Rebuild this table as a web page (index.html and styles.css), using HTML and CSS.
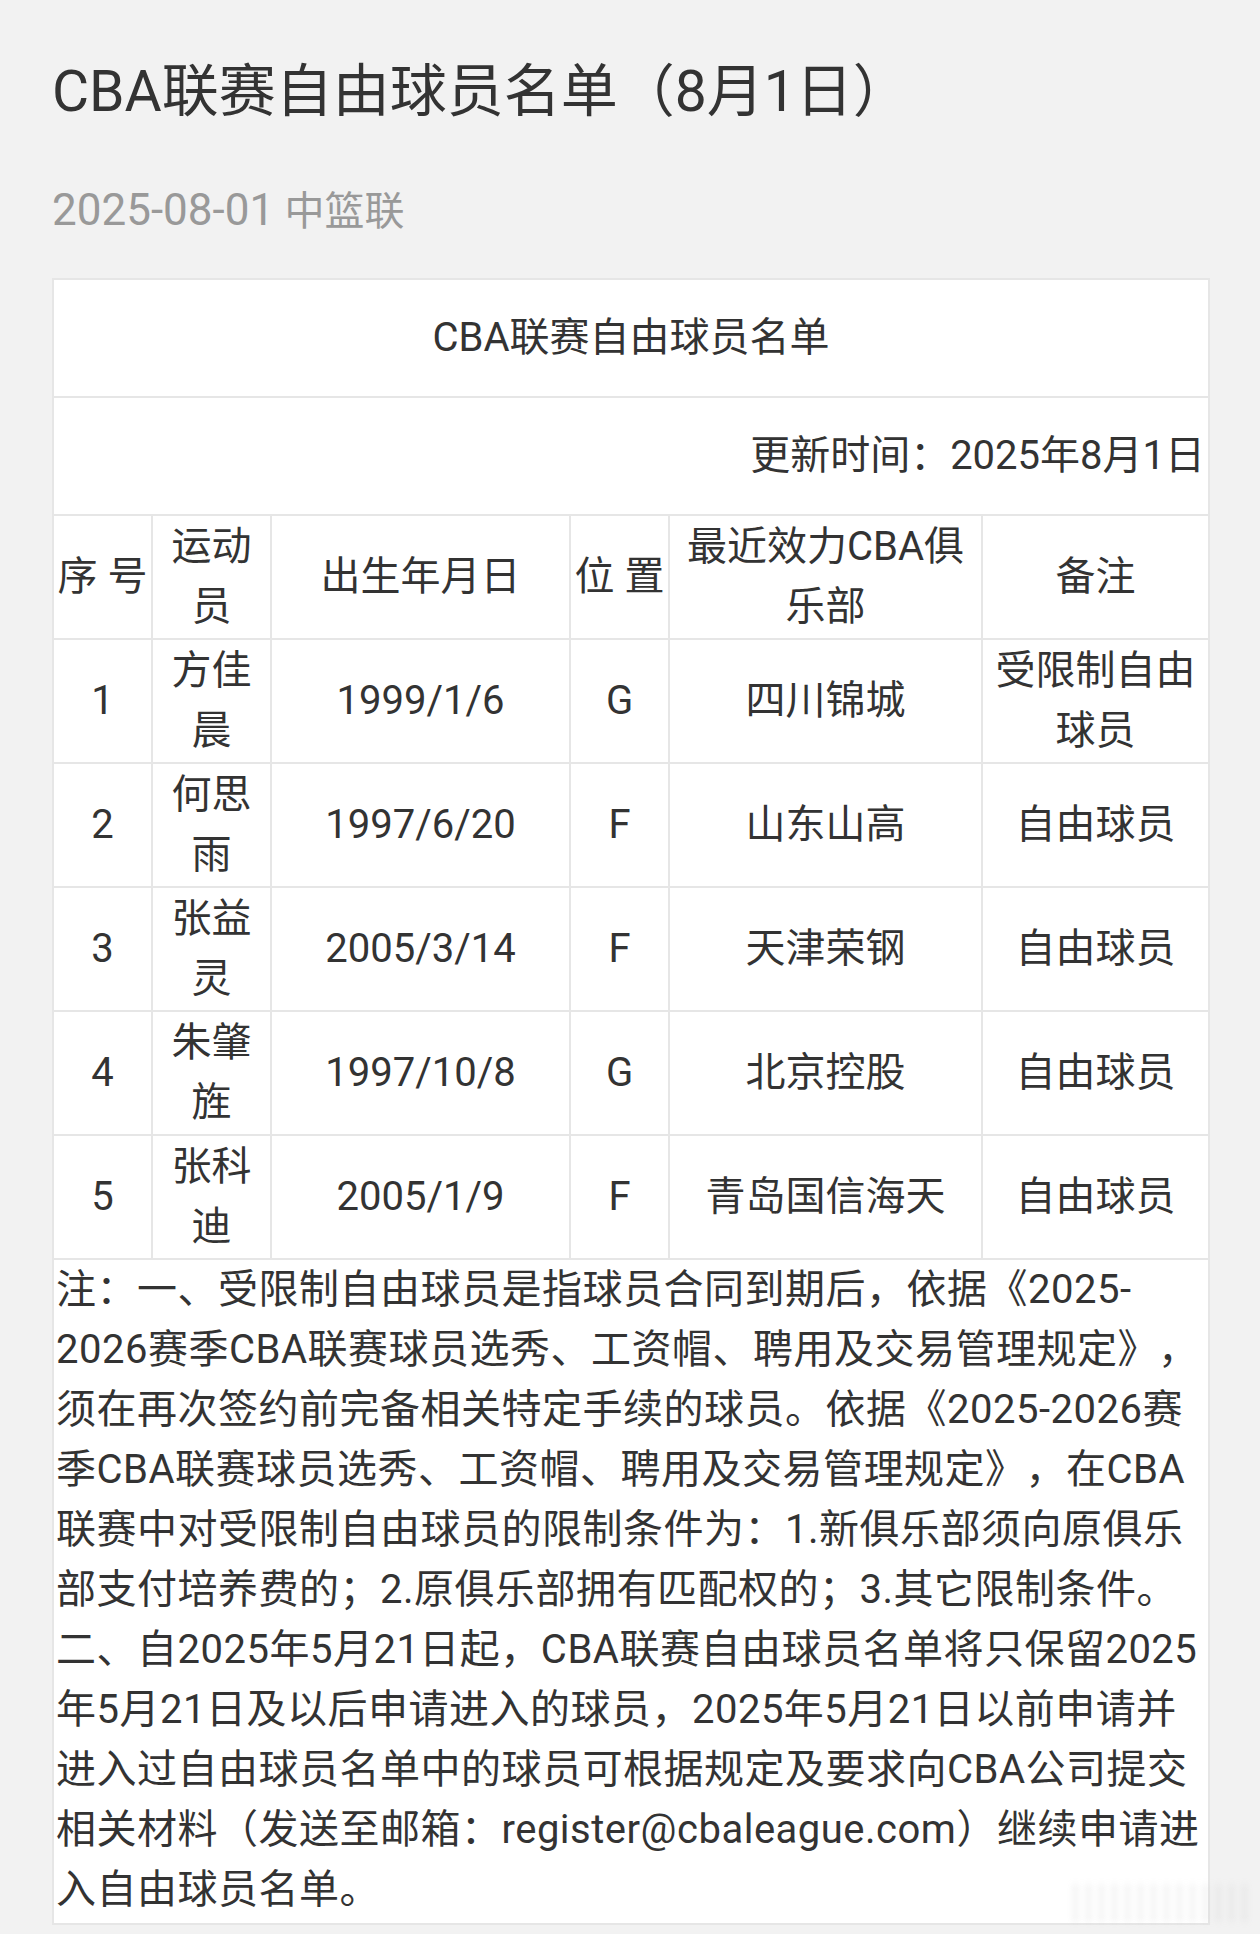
FILE: index.html
```html
<!DOCTYPE html>
<html lang="zh-CN">
<head>
<meta charset="utf-8">
<title>CBA联赛自由球员名单（8月1日）</title>
<link rel="stylesheet" href="styles.css">
</head>
<body>
<div class="page">
  <h1 class="title">CBA联赛自由球员名单（8月1日）</h1>
  <div class="meta"><span class="meta-date">2025-08-01</span> <span class="meta-src">中篮联</span></div>
  <table class="roster">
    <colgroup>
      <col class="c1"><col class="c2"><col class="c3"><col class="c4"><col class="c5"><col class="c6">
    </colgroup>
    <tr><td colspan="6" class="cap">CBA联赛自由球员名单</td></tr>
    <tr><td colspan="6" class="upd">更新时间：2025年8月1日</td></tr>
    <tr>
      <td>序 号</td><td>运动员</td><td>出生年月日</td><td>位 置</td><td>最近效力CBA俱乐部</td><td>备注</td>
    </tr>
    <tr><td>1</td><td>方佳晨</td><td>1999/1/6</td><td>G</td><td>四川锦城</td><td>受限制自由球员</td></tr>
    <tr><td>2</td><td>何思雨</td><td>1997/6/20</td><td>F</td><td>山东山高</td><td>自由球员</td></tr>
    <tr><td>3</td><td>张益灵</td><td>2005/3/14</td><td>F</td><td>天津荣钢</td><td>自由球员</td></tr>
    <tr><td>4</td><td>朱肇旌</td><td>1997/10/8</td><td>G</td><td>北京控股</td><td>自由球员</td></tr>
    <tr><td>5</td><td>张科迪</td><td>2005/1/9</td><td>F</td><td>青岛国信海天</td><td>自由球员</td></tr>
    <tr>
      <td colspan="6" class="notes">注：一、受限制自由球员是指球员合同到期后，依据《2025-<br>2026赛季CBA联赛球员选秀、工资帽、聘用及交易管理规定》，<br>须在再次签约前完备相关特定手续的球员。依据《2025-2026赛<br>季CBA联赛球员选秀、工资帽、聘用及交易管理规定》，在CBA<br>联赛中对受限制自由球员的限制条件为：1.新俱乐部须向原俱乐<br>部支付培养费的；2.原俱乐部拥有匹配权的；3.其它限制条件。<br>二、自2025年5月21日起，CBA联赛自由球员名单将只保留2025<br>年5月21日及以后申请进入的球员，2025年5月21日以前申请并<br>进入过自由球员名单中的球员可根据规定及要求向CBA公司提交<br>相关材料（发送至邮箱：register@cbaleague.com）继续申请进<br>入自由球员名单。</td>
    </tr>
  </table>
  <div class="watermark" aria-hidden="true"></div>
</div>
</body>
</html>
```
FILE: styles.css
```css
html, body {
  margin: 0;
  padding: 0;
  background: #f2f2f2;
}
body {
  font-family: Roboto, "Noto Sans CJK SC", sans-serif;
  color: #333333;
  text-autospace: no-autospace;
  text-spacing-trim: space-all;
}
.page {
  position: relative;
  padding: 52px 52px 11px 52px;
}
.title {
  margin: 0;
  font-size: 57px;
  line-height: 80px;
  font-weight: 400;
  color: #333333;
  white-space: nowrap;
}
.meta {
  margin-top: 53px;
  height: 50px;
  font-size: 42px;
  line-height: 50px;
  color: #999999;
  white-space: nowrap;
}
.meta-date {
  font-size: 44px;
}
.meta-src {
  font-size: 40px;
}
.roster {
  margin-top: 43px;
  width: 1156px;
  border-collapse: collapse;
  table-layout: fixed;
  background: #ffffff;
  font-size: 40px;
  line-height: 60px;
  color: #333333;
}
.c1 { width: 99px; }
.c2 { width: 119px; }
.c3 { width: 299px; }
.c4 { width: 99px; }
.c5 { width: 313px; }
.c6 { width: 227px; }
.roster td {
  border: 2px solid #e6e6e6;
  padding: 1px 2px;
  text-align: center;
  vertical-align: middle;
}
.roster td.cap {
  padding: 28px 2px;
}
.roster td.upd {
  padding: 28px 3px;
  text-align: right;
}
.roster td.notes {
  text-align: left;
  padding: 0 2px 3px 2px;
  letter-spacing: 0.5px;
  white-space: nowrap;
}
.watermark {
  position: absolute;
  left: 1073px;
  top: 1884px;
  width: 175px;
  height: 38px;
  background: repeating-linear-gradient(90deg, rgba(190,190,190,0.35) 0 5px, rgba(255,255,255,0) 5px 13px);
  filter: blur(3px);
  opacity: 0.6;
}
```
